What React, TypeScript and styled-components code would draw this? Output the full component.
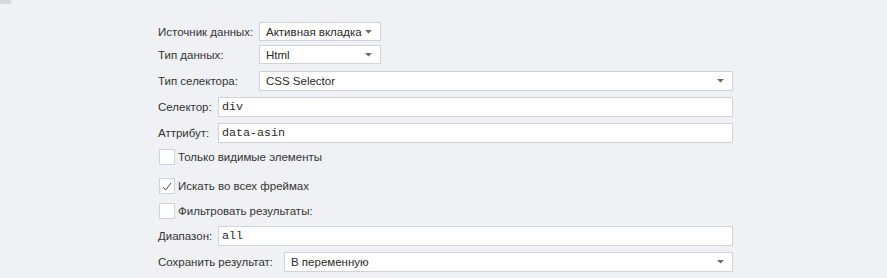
import React from "react";
import styled, { createGlobalStyle } from "styled-components";

const Global = createGlobalStyle`
  html, body { margin: 0; padding: 0; background: #f0f1f5; }
  body { font-family: "Liberation Sans", Arial, sans-serif; font-size: 11.5px; color: #333; }
`;

const Page = styled.div`
  width: 887px;
  height: 278px;
  background: #f0f1f5;
  overflow: hidden;
`;

const TopStub = styled.div`
  width: 11px;
  height: 4px;
  background: #d6d8dd;
`;

const Form = styled.div`
  display: flex;
  flex-direction: column;
  padding: 18px 0 0 158px;
  width: 575px;
`;

const Row = styled.div<{ $mt: number; $h: number }>`
  display: flex;
  align-items: center;
  margin-top: ${(p) => p.$mt}px;
  height: ${(p) => p.$h}px;
`;

const Label = styled.div<{ $w: number }>`
  width: ${(p) => p.$w}px;
  flex: none;
  white-space: nowrap;
`;

const Box = styled.div<{ $w?: number; $mono?: boolean; $pad?: number }>`
  box-sizing: border-box;
  height: 100%;
  ${(p) => (p.$w ? `width: ${p.$w}px; flex: none;` : "flex: 1;")}
  background: #fff;
  border: 1px solid #cfd2d8;
  display: flex;
  align-items: center;
  padding: 0 8px 0 ${(p) => p.$pad ?? 6}px;
  font-family: ${(p) =>
    p.$mono ? '"Liberation Mono", "Courier New", monospace' : '"Liberation Sans", Arial, sans-serif'};
  font-size: ${(p) => (p.$mono ? 11.7 : 11.5)}px;
  color: #2a2a2a;
`;

const BoxText = styled.span`
  flex: 1;
  white-space: nowrap;
  overflow: hidden;
`;

const Arrow = () => (
  <svg width="7" height="4" viewBox="0 0 7 4" style={{ flex: "none" }}>
    <path d="M0.5 0h6v1H6L3.5 3.5 1 1H0.5z" fill="#6a6c71" />
  </svg>
);

const CheckBox = styled.div`
  box-sizing: border-box;
  width: 16px;
  height: 16px;
  margin-left: 1px;
  margin-right: 3px;
  background: #fff;
  border: 1px solid #cfd2d8;
  display: flex;
  align-items: center;
  justify-content: center;
  flex: none;
`;

const Check = () => (
  <svg width="10" height="9" viewBox="0 0 10 9">
    <path d="M1 5l2.6 3L9 1" fill="none" stroke="#444" strokeWidth="1" />
  </svg>
);

const Select = ({ w, text }: { w?: number; text: string }) => (
  <Box $w={w}>
    <BoxText>{text}</BoxText>
    <Arrow />
  </Box>
);

export default function App() {
  return (
    <Page>
      <Global />
      <TopStub />
      <Form>
        <Row $mt={0} $h={19}>
          <Label $w={101}>Источник данных:</Label>
          <Select w={122} text="Активная вкладка" />
        </Row>
        <Row $mt={4} $h={19}>
          <Label $w={101}>Тип данных:</Label>
          <Select w={122} text="Html" />
        </Row>
        <Row $mt={7} $h={20}>
          <Label $w={101}>Тип селектора:</Label>
          <Select text="CSS Selector" />
        </Row>
        <Row $mt={6} $h={20}>
          <Label $w={60}>Селектор:</Label>
          <Box $mono $pad={3}>div</Box>
        </Row>
        <Row $mt={6} $h={20}>
          <Label $w={60}>Аттрибут:</Label>
          <Box $mono $pad={3}>data-asin</Box>
        </Row>
        <Row $mt={6} $h={16}>
          <CheckBox />
          Только видимые элементы
        </Row>
        <Row $mt={13} $h={16}>
          <CheckBox>
            <Check />
          </CheckBox>
          Искать во всех фреймах
        </Row>
        <Row $mt={9} $h={16}>
          <CheckBox />
          Фильтровать результаты:
        </Row>
        <Row $mt={7} $h={20}>
          <Label $w={60}>Диапазон:</Label>
          <Box $mono $pad={3}>all</Box>
        </Row>
        <Row $mt={6} $h={20}>
          <Label $w={126}>Сохранить результат:</Label>
          <Select text="В переменную" />
        </Row>
      </Form>
    </Page>
  );
}
